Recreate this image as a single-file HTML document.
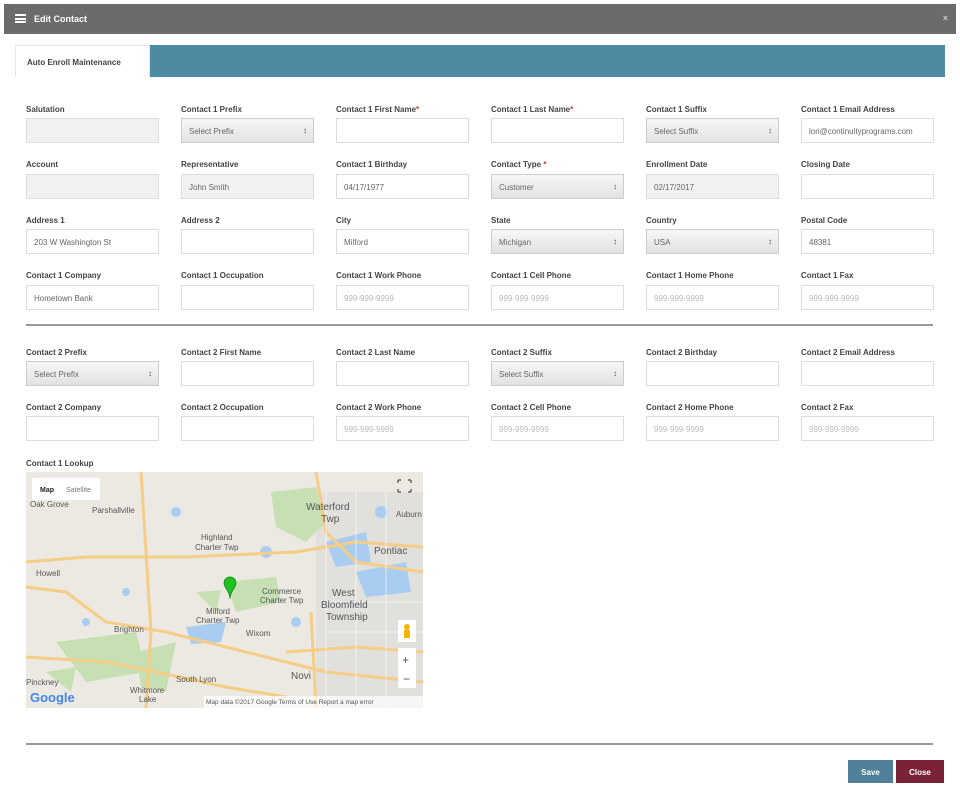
<!DOCTYPE html>
<html><head><style>
*{box-sizing:border-box;margin:0;padding:0}
body{width:960px;height:800px;background:#fff;font-family:"Liberation Sans",sans-serif;position:relative;overflow:hidden;color:#333}
.hdr{position:absolute;left:4px;top:4px;width:952px;height:30px;background:#6b6b6b;color:#fff;font-size:9px;font-weight:bold}
.hdr .t{position:absolute;left:30px;top:10px}
.hdr .x{position:absolute;right:8px;top:9px;color:#ccc;font-size:9px}
.ico{position:absolute;left:11px;top:10px;width:11px;height:9px}
.ico i{display:block;height:2px;background:#fff;margin-bottom:1.5px}
.tabbar{position:absolute;left:150px;top:45px;width:795px;height:32px;background:#4f8aa3}
.tab{position:absolute;left:15px;top:45px;width:135px;height:32px;background:#fff;border:1px solid #e6e6e6;border-bottom:none;font-size:8px;font-weight:bold;padding:12px 0 0 11px;color:#444}
.l{position:absolute;font-size:8px;font-weight:bold;color:#444}
.l b{color:#c0392b}
.f{position:absolute;width:133px;height:25px;border:1px solid #ddd;background:#fff;font-size:8px;color:#666;padding:8px 0 0 7px;white-space:nowrap;overflow:hidden}
.f.d{background:#f1f1f1}
.f.s{background:linear-gradient(#f7f7f7,#e2e2e2);border-color:#ccc}
.f.s:after{content:"\2195";position:absolute;right:6px;top:7px;font-size:8px;color:#555}
.f.p{color:#bbb}
.hr{position:absolute;left:26px;width:907px;height:2px;background:#999}
.btn{position:absolute;top:760px;height:23px;color:#fff;font-size:8px;font-weight:bold;text-align:center;padding-top:8px}
</style></head><body>
<div class="hdr"><div class="ico"><i></i><i></i><i></i></div><span class="t">Edit Contact</span><span class="x">×</span></div>
<div class="tabbar"></div>
<div class="tab">Auto Enroll Maintenance</div>

<div class="l" style="left:26px;top:105px">Salutation</div>
<div class="l" style="left:181px;top:105px">Contact 1 Prefix</div>
<div class="l" style="left:336px;top:105px">Contact 1 First Name<b>*</b></div>
<div class="l" style="left:491px;top:105px">Contact 1 Last Name<b>*</b></div>
<div class="l" style="left:646px;top:105px">Contact 1 Suffix</div>
<div class="l" style="left:801px;top:105px">Contact 1 Email Address</div>
<div class="f d" style="left:26px;top:118px"></div>
<div class="f s" style="left:181px;top:118px">Select Prefix</div>
<div class="f" style="left:336px;top:118px"></div>
<div class="f" style="left:491px;top:118px"></div>
<div class="f s" style="left:646px;top:118px">Select Suffix</div>
<div class="f" style="left:801px;top:118px">lori@continuityprograms.com</div>

<div class="l" style="left:26px;top:160px">Account</div>
<div class="l" style="left:181px;top:160px">Representative</div>
<div class="l" style="left:336px;top:160px">Contact 1 Birthday</div>
<div class="l" style="left:491px;top:160px">Contact Type <b>*</b></div>
<div class="l" style="left:646px;top:160px">Enrollment Date</div>
<div class="l" style="left:801px;top:160px">Closing Date</div>
<div class="f d" style="left:26px;top:174px"></div>
<div class="f d" style="left:181px;top:174px">John Smith</div>
<div class="f" style="left:336px;top:174px">04/17/1977</div>
<div class="f s" style="left:491px;top:174px">Customer</div>
<div class="f d" style="left:646px;top:174px">02/17/2017</div>
<div class="f" style="left:801px;top:174px"></div>

<div class="l" style="left:26px;top:216px">Address 1</div>
<div class="l" style="left:181px;top:216px">Address 2</div>
<div class="l" style="left:336px;top:216px">City</div>
<div class="l" style="left:491px;top:216px">State</div>
<div class="l" style="left:646px;top:216px">Country</div>
<div class="l" style="left:801px;top:216px">Postal Code</div>
<div class="f" style="left:26px;top:229px">203 W Washington St</div>
<div class="f" style="left:181px;top:229px"></div>
<div class="f" style="left:336px;top:229px">Milford</div>
<div class="f s" style="left:491px;top:229px">Michigan</div>
<div class="f s" style="left:646px;top:229px">USA</div>
<div class="f" style="left:801px;top:229px">48381</div>

<div class="l" style="left:26px;top:271px">Contact 1 Company</div>
<div class="l" style="left:181px;top:271px">Contact 1 Occupation</div>
<div class="l" style="left:336px;top:271px">Contact 1 Work Phone</div>
<div class="l" style="left:491px;top:271px">Contact 1 Cell Phone</div>
<div class="l" style="left:646px;top:271px">Contact 1 Home Phone</div>
<div class="l" style="left:801px;top:271px">Contact 1 Fax</div>
<div class="f" style="left:26px;top:285px">Hometown Bank</div>
<div class="f" style="left:181px;top:285px"></div>
<div class="f p" style="left:336px;top:285px">999-999-9999</div>
<div class="f p" style="left:491px;top:285px">999-999-9999</div>
<div class="f p" style="left:646px;top:285px">999-999-9999</div>
<div class="f p" style="left:801px;top:285px">999-999-9999</div>

<div class="hr" style="top:324px"></div>

<div class="l" style="left:26px;top:348px">Contact 2 Prefix</div>
<div class="l" style="left:181px;top:348px">Contact 2 First Name</div>
<div class="l" style="left:336px;top:348px">Contact 2 Last Name</div>
<div class="l" style="left:491px;top:348px">Contact 2 Suffix</div>
<div class="l" style="left:646px;top:348px">Contact 2 Birthday</div>
<div class="l" style="left:801px;top:348px">Contact 2 Email Address</div>
<div class="f s" style="left:26px;top:361px">Select Prefix</div>
<div class="f" style="left:181px;top:361px"></div>
<div class="f" style="left:336px;top:361px"></div>
<div class="f s" style="left:491px;top:361px">Select Suffix</div>
<div class="f" style="left:646px;top:361px"></div>
<div class="f" style="left:801px;top:361px"></div>

<div class="l" style="left:26px;top:403px">Contact 2 Company</div>
<div class="l" style="left:181px;top:403px">Contact 2 Occupation</div>
<div class="l" style="left:336px;top:403px">Contact 2 Work Phone</div>
<div class="l" style="left:491px;top:403px">Contact 2 Cell Phone</div>
<div class="l" style="left:646px;top:403px">Contact 2 Home Phone</div>
<div class="l" style="left:801px;top:403px">Contact 2 Fax</div>
<div class="f" style="left:26px;top:416px"></div>
<div class="f" style="left:181px;top:416px"></div>
<div class="f p" style="left:336px;top:416px">999-999-9999</div>
<div class="f p" style="left:491px;top:416px">999-999-9999</div>
<div class="f p" style="left:646px;top:416px">999-999-9999</div>
<div class="f p" style="left:801px;top:416px">999-999-9999</div>

<div class="l" style="left:26px;top:459px">Contact 1 Lookup</div>
<svg style="position:absolute;left:26px;top:472px" width="397" height="236" viewBox="0 0 397 236" font-family="Liberation Sans" font-size="8" fill="#555">
<rect width="397" height="236" fill="#ece9e3"/>
<rect x="290" y="20" width="107" height="216" fill="#e2e0dc"/>
<g fill="#c6e0b4">
<path d="M245 20 L290 15 L300 50 L280 70 L250 55Z"/><path d="M200 110 L250 105 L255 130 L210 140Z"/>
<path d="M30 170 L110 160 L120 200 L60 210Z"/><path d="M110 180 L150 170 L140 220 L115 215Z"/>
<path d="M170 120 L195 118 L190 140Z"/><path d="M20 200 L50 195 L45 220Z"/></g>
<g fill="#a9cdf0">
<path d="M300 70 L340 60 L345 90 L310 95Z"/><path d="M330 100 L380 90 L385 120 L340 125Z"/>
<path d="M160 155 L200 150 L195 170 L165 172Z"/><circle cx="240" cy="80" r="6"/><circle cx="150" cy="40" r="5"/>
<circle cx="270" cy="150" r="5"/><circle cx="60" cy="150" r="4"/><circle cx="100" cy="120" r="4"/><circle cx="355" cy="40" r="6"/></g>
<g stroke="#f5cd87" stroke-width="3" fill="none">
<path d="M0 90 L60 85 L160 85 L270 80 L330 70 L397 75"/>
<path d="M0 115 L40 120 L80 150 L140 160 L200 175 L260 190 L300 200 L397 210"/>
<path d="M115 0 L120 80 L125 160 L120 236"/>
<path d="M290 0 L300 60 L330 90 L397 100"/>
<path d="M285 140 L290 236"/><path d="M260 180 L330 175 L397 180"/>
<path d="M0 185 L80 190 L130 200 L200 215 L260 225"/>
</g>
<g stroke="#fff" stroke-width="1" opacity=".6"><path d="M300 20 V236 M330 20 V236 M360 20 V236 M300 130 H397 M300 160 H397"/></g>
<rect x="6" y="6" width="68" height="22" fill="#fff" rx="2"/><text x="14" y="20" font-weight="bold" fill="#222" font-size="7">Map</text><text x="40" y="20" font-size="7" fill="#777">Satellite</text>
<text x="4" y="35">Oak Grove</text><text x="66" y="41">Parshallville</text>
<text x="280" y="38" font-size="10">Waterford</text><text x="295" y="50" font-size="10">Twp</text>
<text x="370" y="45" font-size="8">Auburn</text><text x="348" y="82" font-size="10">Pontiac</text>
<text x="175" y="68">Highland</text><text x="169" y="78">Charter Twp</text>
<text x="10" y="104">Howell</text><text x="236" y="122">Commerce</text><text x="234" y="131">Charter Twp</text>
<text x="306" y="124" font-size="10">West</text><text x="295" y="136" font-size="10">Bloomfield</text><text x="300" y="148" font-size="10">Township</text>
<text x="180" y="142">Milford</text><text x="170" y="151">Charter Twp</text>
<text x="88" y="160">Brighton</text><text x="220" y="164">Wixom</text>
<text x="265" y="207" font-size="10">Novi</text><text x="150" y="210">South Lyon</text>
<text x="0" y="213">Pinckney</text><text x="104" y="221">Whitmore</text><text x="113" y="230">Lake</text>
<text x="4" y="230" font-size="13" font-weight="bold" fill="#4285f4">Google</text>
<rect x="178" y="224" width="219" height="12" fill="#fff" opacity=".7"/>
<text x="180" y="232" font-size="6.5">Map data ©2017 Google   Terms of Use   Report a map error</text>
<path d="M198 111 a6 6 0 1 1 12 0 c0 5 -6 8 -6 16 c0 -8 -6 -11 -6 -16z" fill="#1ec21e" stroke="#0a7a0a" stroke-width=".7"/>
<rect x="372" y="148" width="18" height="22" fill="#fff"/><circle cx="381" cy="155" r="3" fill="#f5b400"/><rect x="378" y="158" width="6" height="8" fill="#f5b400"/>
<rect x="372" y="176" width="18" height="40" fill="#fff"/><text x="376" y="192" font-size="12" fill="#555">+</text><text x="377" y="211" font-size="12" fill="#555">−</text>
<path d="M372 8h3M372 8v3M385 8h-3M385 8v3M372 20h3M372 20v-3M385 20h-3M385 20v-3" stroke="#666" stroke-width="1.5"/>
</svg>

<div class="hr" style="top:743px"></div>
<div class="btn" style="left:848px;width:45px;background:#4f7f99">Save</div>
<div class="btn" style="left:896px;width:48px;background:#7a2236">Close</div>
</body></html>
